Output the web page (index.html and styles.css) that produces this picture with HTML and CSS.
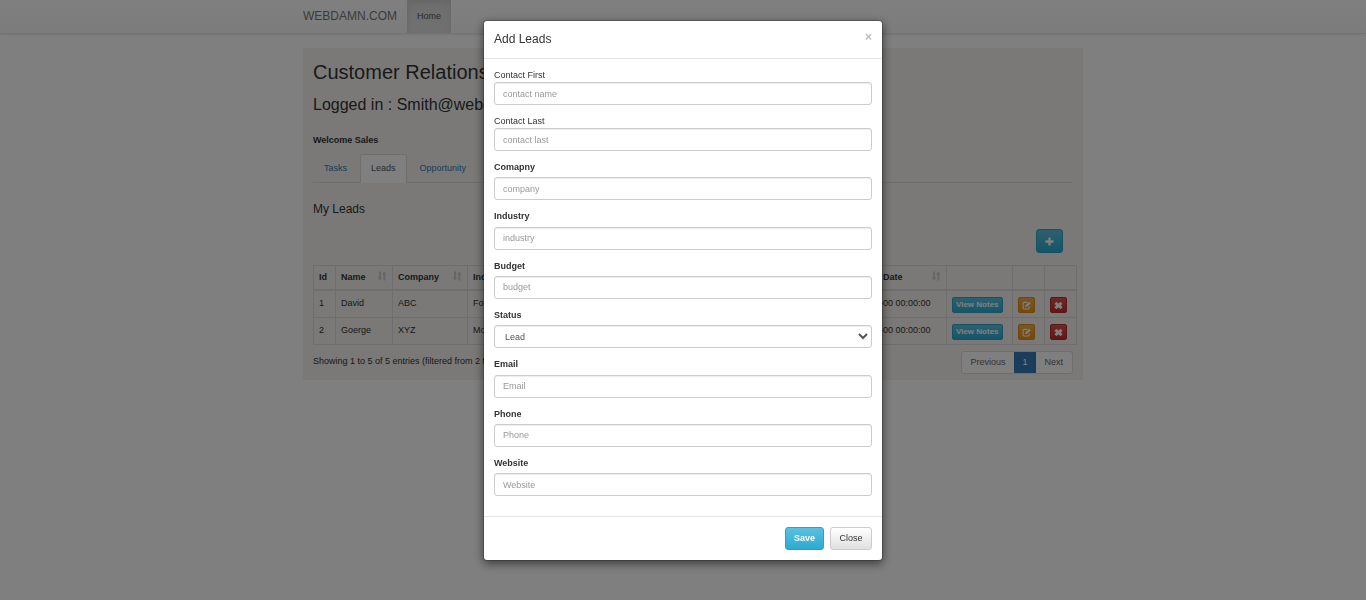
FILE: index.html
```html
<!DOCTYPE html>
<html lang="en">
<head>
<meta charset="utf-8">
<title>Customer Relationship Management</title>
<link rel="stylesheet" href="styles.css">
</head>
<body>
<svg class="defs" aria-hidden="true">
  <symbol id="sort" viewBox="0 0 10 10"><path d="M2 0.5H4V6.5H5.4L3 9.5L0.6 6.5H2ZM6.3 9.5H8.3V3.5H9.7L7.3 0.5L4.9 3.5H6.3Z" fill="currentColor"/></symbol>
  <symbol id="edit" viewBox="0 0 10 10"><path d="M6 1.5H2.2Q1.2 1.5 1.2 2.5V7.8Q1.2 8.8 2.2 8.8H7Q8 8.8 8 7.8V6" fill="none" stroke="currentColor" stroke-width="1.2"/><path d="M3.6 6.9L4 4.7L8 0.7L9.7 2.4L5.7 6.4Z" fill="currentColor"/></symbol>
  <symbol id="remove" viewBox="0 0 10 10"><path d="M1.5 2L8.5 8M8.5 2L1.5 8" fill="none" stroke="currentColor" stroke-width="3.2"/></symbol>
  <symbol id="plus" viewBox="0 0 10 10"><path d="M5 0.5V9.5M0.5 5H9.5" fill="none" stroke="currentColor" stroke-width="2.6"/></symbol>
</svg>
<nav class="navbar">
  <div class="container">
    <a class="brand" href="#">WEBDAMN.COM</a>
    <a class="nav-link active" href="#">Home</a>
  </div>
</nav>
<main class="container">
  <div class="panel">
    <h2 class="title">Customer Relationship</h2>
    <h3 class="user">Logged in : Smith@webdamn.com</h3>
    <p class="welcome">Welcome Sales</p>
    <ul class="tabs">
      <li><a class="tab" href="#">Tasks</a></li>
      <li><a class="tab current" href="#">Leads</a></li>
      <li><a class="tab" href="#">Opportunity</a></li>
    </ul>
    <h4 class="section-title">My Leads</h4>
    <div class="toolbar">
      <button class="btn btn-info" type="button" aria-label="Add lead"><svg class="icon"><use href="#plus"/></svg></button>
    </div>
    <table class="leads">
      <colgroup>
        <col class="col-id"><col class="col-name"><col class="col-company"><col class="col-industry"><col><col class="col-date"><col class="col-notes"><col class="col-action"><col class="col-action">
      </colgroup>
      <thead>
        <tr>
          <th>Id</th>
          <th><span class="head">Name<svg class="icon"><use href="#sort"/></svg></span></th>
          <th><span class="head">Company<svg class="icon"><use href="#sort"/></svg></span></th>
          <th><span class="head">Industry<svg class="icon"><use href="#sort"/></svg></span></th>
          <th></th>
          <th><span class="head">Created Date<svg class="icon"><use href="#sort"/></svg></span></th>
          <th></th><th></th><th></th>
        </tr>
      </thead>
      <tbody>
        <tr>
          <td>1</td><td>David</td><td>ABC</td><td>Food</td><td></td><td>0000-00-00 00:00:00</td>
          <td><button class="btn-xs btn-info" type="button">View Notes</button></td>
          <td><button class="btn-xs btn-warning" type="button" aria-label="Edit"><svg class="icon"><use href="#edit"/></svg></button></td>
          <td><button class="btn-xs btn-danger" type="button" aria-label="Delete"><svg class="icon"><use href="#remove"/></svg></button></td>
        </tr>
        <tr>
          <td>2</td><td>Goerge</td><td>XYZ</td><td>Motors</td><td></td><td>0000-00-00 00:00:00</td>
          <td><button class="btn-xs btn-info" type="button">View Notes</button></td>
          <td><button class="btn-xs btn-warning" type="button" aria-label="Edit"><svg class="icon"><use href="#edit"/></svg></button></td>
          <td><button class="btn-xs btn-danger" type="button" aria-label="Delete"><svg class="icon"><use href="#remove"/></svg></button></td>
        </tr>
      </tbody>
    </table>
    <div class="table-footer">
      <span>Showing 1 to 5 of 5 entries (filtered from 2 total entries)</span>
      <div class="pagination">
        <a class="page" href="#">Previous</a>
        <a class="page selected" href="#">1</a>
        <a class="page" href="#">Next</a>
      </div>
    </div>
  </div>
</main>
<div class="backdrop">
  <form class="modal" role="dialog" aria-labelledby="modal-title">
    <header class="modal-header">
      <h4 class="modal-title" id="modal-title">Add Leads</h4>
      <button class="close" type="button" aria-label="Close dialog">×</button>
    </header>
    <div class="modal-body">
      <div class="field compact"><label for="first">Contact First</label><input id="first" type="text" placeholder="contact name"></div>
      <div class="field compact"><label for="last">Contact Last</label><input id="last" type="text" placeholder="contact last"></div>
      <div class="field"><label for="company">Comapny</label><input id="company" type="text" placeholder="company"></div>
      <div class="field"><label for="industry">Industry</label><input id="industry" type="text" placeholder="industry"></div>
      <div class="field"><label for="budget">Budget</label><input id="budget" type="text" placeholder="budget"></div>
      <div class="field"><label for="status">Status</label><select id="status"><option>Lead</option></select></div>
      <div class="field"><label for="email">Email</label><input id="email" type="email" placeholder="Email"></div>
      <div class="field"><label for="phone">Phone</label><input id="phone" type="tel" placeholder="Phone"></div>
      <div class="field"><label for="website">Website</label><input id="website" type="text" placeholder="Website"></div>
    </div>
    <footer class="modal-footer">
      <button class="btn btn-info save" type="submit">Save</button>
      <button class="btn btn-default" type="button">Close</button>
    </footer>
  </form>
</div>
</body>
</html>
```
FILE: styles.css
```css
* { box-sizing: border-box; }
body {
  margin: 0;
  background: #fff;
  color: #333;
  font-family: "Liberation Sans", Arial, sans-serif;
  font-size: 9px;
  line-height: 1.48;
}
h2, h3, h4, p, ul { margin: 0; padding: 0; font-weight: 400; }
a { color: #337ab7; text-decoration: none; }
button, input, select { font: inherit; margin: 0; }
.defs { position: absolute; width: 0; height: 0; }
.icon { display: block; width: 10px; height: 10px; }
.container { width: 100%; max-width: 780px; margin: 0 auto; padding-left: 10px; }

.navbar {
  background: linear-gradient(#fff, #f8f8f8);
  border-bottom: 1px solid #e7e7e7;
  box-shadow: 0 1px 3px rgba(0, 0, 0, .08);
  margin-bottom: 14px;
}
.navbar .container { display: flex; align-items: stretch; }
.brand { font-size: 12px; line-height: 33px; color: #777; margin-right: 10px; }
.nav-link { padding: 0 10px; line-height: 33px; color: #555; }
.nav-link.active { background: linear-gradient(#dbdbdb, #e2e2e2); box-shadow: inset 0 2px 6px rgba(0, 0, 0, .08); }

.panel { width: 780px; padding: 10px 10px 6px; background: #f4f3ee; }
.title { font-size: 20px; line-height: 28px; }
.user { font-size: 16px; line-height: 37px; }
.welcome { font-weight: 700; line-height: 16px; padding: 9px 0 6px; }
.tabs { display: flex; list-style: none; border-bottom: 1px solid #ddd; gap: 2px; }
.tab { display: block; padding: 0 10px 1px; line-height: 27px; border: 1px solid transparent; border-bottom: 0; border-radius: 3px 3px 0 0; margin-bottom: -1px; }
.tab.current { color: #555; background: #fff; border-color: #ddd; }
.section-title { font-size: 12px; line-height: 16px; padding-top: 18px; }
.toolbar { display: flex; justify-content: flex-end; padding: 12px 10px 12px 0; }

.btn, .btn-xs { border: 1px solid; border-radius: 3px; cursor: pointer; color: #fff; }
.btn { height: 23px; padding: 0 8px; }
.btn-info { background: linear-gradient(#5bc0de, #2aabd2); border-color: #28a4c9; }
.btn-warning { background: linear-gradient(#f0ad4e, #eb9316); border-color: #e38d13; }
.btn-danger { background: linear-gradient(#d9534f, #c12e2a); border-color: #b92c28; }
.btn-default { background: linear-gradient(#fff, #e0e0e0); border-color: #ccc; color: #333; }
.btn-xs { display: block; height: 16px; padding: 0 3px; font-size: 8px; font-weight: 700; line-height: 14px; border-radius: 2px; }
.btn-xs .icon { width: 9px; height: 9px; margin: 0 auto; }
.btn-warning, .btn-danger { width: 17px; }
.toolbar .btn { height: 24px; width: 27px; }
.toolbar .icon { width: 9px; height: 9px; }

.leads { width: 764px; table-layout: fixed; border-collapse: collapse; }
.leads th, .leads td { border: 1px solid #ddd; padding: 5px; text-align: left; vertical-align: top; white-space: nowrap; }
.leads td { padding: 6px 5px 4px; }
.leads th { border-bottom-width: 2px; }
.head { display: flex; justify-content: space-between; align-items: flex-start; }
.head .icon { color: #ccc; }
.col-id { width: 22px; }
.col-name { width: 57px; }
.col-company { width: 75px; }
.col-industry { width: 75px; }
.col-date { width: 105px; }
.col-notes { width: 66px; }
.col-action { width: 32px; }
.table-footer { display: flex; justify-content: space-between; align-items: flex-start; padding-top: 6px; line-height: 20px; }
.pagination { display: flex; border: 1px solid #ddd; border-radius: 3px; background: #fff; }
.page { padding: 0 8px; line-height: 21px; color: #666; border-right: 1px solid transparent; }
.page.selected { background: #337ab7; border-color: #337ab7; color: #fff; }

.backdrop { position: fixed; inset: 0; padding: 20px 0; background: rgba(0, 0, 0, .5); overflow: auto; }
.modal {
  width: 400px;
  max-width: 100%;
  margin: 0 auto;
  background: #fff;
  background-clip: padding-box;
  border: 1px solid rgba(0, 0, 0, .2);
  border-radius: 4px;
  box-shadow: 0 3px 10px rgba(0, 0, 0, .5);
}
.modal-header { display: flex; justify-content: space-between; align-items: flex-start; padding: 10px; border-bottom: 1px solid #e5e5e5; }
.modal-title { font-size: 12px; line-height: 17px; }
.close { padding: 0; border: 0; background: none; color: #bbb; font-size: 12px; font-weight: 700; line-height: 12px; }
.modal-body { padding: 10px; }
.field { display: flex; flex-direction: column; gap: 3px; margin-bottom: 10px; }
.field label { font-weight: 700; }
.field.compact { gap: 0; }
.field.compact label { font-weight: 400; line-height: 13px; }
.field input, .field select {
  width: 100%;
  height: 23px;
  padding: 0 8px;
  border: 1px solid #ccc;
  border-radius: 3px;
  background: #fff;
  color: #555;
  box-shadow: inset 0 1px 1px rgba(0, 0, 0, .075);
}
.field select { padding: 0 6px; }
.field ::placeholder { color: #999; }
.modal-footer { display: flex; justify-content: flex-end; gap: 6px; padding: 10px; border-top: 1px solid #e5e5e5; }
.modal-footer .btn-default { min-width: 42px; }
.save { font-weight: 700; }
```
